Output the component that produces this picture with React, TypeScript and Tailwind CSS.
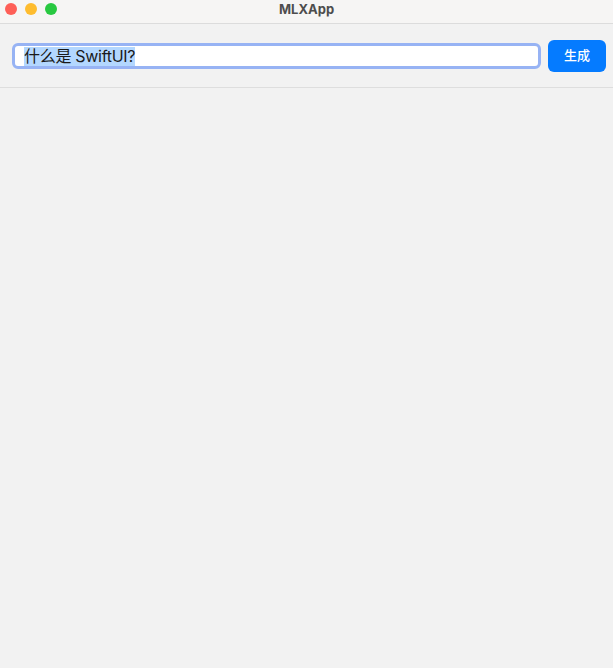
import React from "react";

function TrafficLights() {
  return (
    <div className="absolute left-[5px] top-[3px] flex gap-[8px]">
      <span className="block h-[12px] w-[12px] rounded-full bg-[#fe5f57]" />
      <span className="block h-[12px] w-[12px] rounded-full bg-[#febc2e]" />
      <span className="block h-[12px] w-[12px] rounded-full bg-[#28c840]" />
    </div>
  );
}

export default function App() {
  return (
    <div
      className="flex h-[668px] w-[613px] flex-col overflow-hidden bg-[#f2f2f2]"
      style={{ fontFamily: 'Inter, "Noto Sans CJK SC", sans-serif' }}
    >
      <div className="relative flex h-[24px] shrink-0 justify-center border-b border-[#dcdcdc] bg-[#f6f5f4] pt-[1px]">
        <TrafficLights />
        <span className="text-[13px] font-bold leading-[16px] text-[#4d4d4d]">MLXApp</span>
      </div>
      <div className="flex h-[64px] shrink-0 items-center gap-[7px] border-b border-[#dedede] pl-[12px] pr-[7px] pt-[1px]">
        <div className="flex h-[26px] flex-1 items-center rounded-[6px] border-[3px] border-[#97b3f4] bg-white pl-[9px]">
          <span className="bg-[#b3d7ff] text-[16px] leading-[19px] tracking-[-0.3px] text-[#1a1a1a]">什么是 SwiftUI?</span>
        </div>
        <button className="h-[32px] w-[58px] rounded-[6px] bg-[#057bff] text-[13px] font-medium text-white">
          生成
        </button>
      </div>
      <div className="flex-1" />
    </div>
  );
}
